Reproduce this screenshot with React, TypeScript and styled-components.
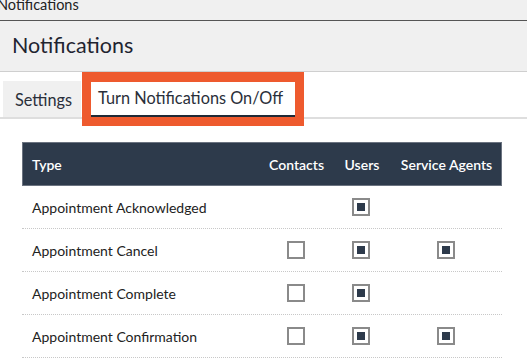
import React from "react";
import styled, { createGlobalStyle } from "styled-components";

const Global = createGlobalStyle`
  html, body { margin: 0; padding: 0; background: #ffffff; }
  body { font-family: "Lato", "Open Sans", sans-serif; color: #222; overflow: hidden; }
  * { box-sizing: border-box; }
`;

const Page = styled.div`
  position: relative;
  width: 527px;
  height: 361px;
  overflow: hidden;
  background: #fff;
`;

const TopBar = styled.div`
  height: 21px;
  background: #f0f0f0;
  border-bottom: 1px solid #555;
  font-size: 14.5px;
  line-height: 14px;
  overflow: hidden;
`;

const TopTitle = styled.div`
  margin-left: -3px;
  margin-top: -2px;
  color: #222;
`;

const Header = styled.div`
  height: 51px;
  background: #f0f0f0;
  border-bottom: 1px solid #cfcfcf;
  display: flex;
  align-items: center;
  padding-left: 12px;
  padding-bottom: 2px;
  font-size: 21.5px;
  color: #1f2430;
`;

const TabRow = styled.div`
  display: flex;
  align-items: flex-end;
  padding: 9px 0 0 3px;
  border-bottom: 2px solid #dedede;
`;

const Tab = styled.div<{ $active?: boolean }>`
  height: 36px;
  display: flex;
  align-items: center;
  font-size: 16.3px;
  color: #2a2f3a;
  background: ${(p) => (p.$active ? "#ffffff" : "#f0f0f0")};
  border-bottom: ${(p) => (p.$active ? "2px solid #1f2a36" : "0")};
  padding: ${(p) => (p.$active ? "0 12px 2px 11px" : "0 9px 0 12px")};
  margin-left: ${(p) => (p.$active ? "6px" : "0")};
`;

const Highlight = styled.div`
  position: absolute;
  left: 82px;
  top: 72px;
  width: 222px;
  height: 54px;
  border: 9px solid #ee5a2e;
  border-top-width: 10px;
  pointer-events: none;
`;

const Table = styled.div`
  margin: 23px 0 0 22px;
  width: 480px;
`;

const Grid = styled.div`
  display: grid;
  grid-template-columns: 236px 75px 56px 113px;
  align-items: center;
`;

const HeadRow = styled(Grid)`
  height: 44px;
  background: #2d3a4b;
  border: 1px solid #6b7380;
  color: #ffffff;
  font-size: 14px;
  font-weight: 600;
`;

const HeadCell = styled.div<{ $center?: boolean }>`
  text-align: ${(p) => (p.$center ? "center" : "left")};
  padding-left: ${(p) => (p.$center ? "0" : "9px")};
  white-space: nowrap;
`;

const BodyRow = styled(Grid)`
  height: 43px;
  border-bottom: 1px dotted #c8c8c8;
  font-size: 14px;
  color: #222;
`;

const TypeCell = styled.div`
  padding-left: 10px;
  padding-top: 1px;
  white-space: nowrap;
`;

const CheckCell = styled.div`
  display: flex;
  justify-content: center;
  align-items: center;
`;

const Box = styled.div<{ $checked?: boolean }>`
  width: 18px;
  height: 18px;
  border: 2px solid #8a8a8a;
  background: #fff;
  display: flex;
  align-items: center;
  justify-content: center;
  &::after {
    content: "";
    display: ${(p) => (p.$checked ? "block" : "none")};
    width: 8px;
    height: 8px;
    background: #2d3a4b;
  }
`;

type Val = boolean | null;
const rows: { name: string; vals: [Val, Val, Val] }[] = [
  { name: "Appointment Acknowledged", vals: [null, true, null] },
  { name: "Appointment Cancel", vals: [false, true, true] },
  { name: "Appointment Complete", vals: [false, true, null] },
  { name: "Appointment Confirmation", vals: [false, true, true] },
];

export default function App() {
  return (
    <Page>
      <Global />
      <TopBar>
        <TopTitle>Notifications</TopTitle>
      </TopBar>
      <Header>Notifications</Header>
      <TabRow>
        <Tab>Settings</Tab>
        <Tab $active>Turn Notifications On/Off</Tab>
      </TabRow>
      <Highlight />
      <Table>
        <HeadRow>
          <HeadCell>Type</HeadCell>
          <HeadCell $center>Contacts</HeadCell>
          <HeadCell $center>Users</HeadCell>
          <HeadCell $center>Service Agents</HeadCell>
        </HeadRow>
        {rows.map((r) => (
          <BodyRow key={r.name}>
            <TypeCell>{r.name}</TypeCell>
            {r.vals.map((v, i) => (
              <CheckCell key={i}>{v === null ? null : <Box $checked={v} />}</CheckCell>
            ))}
          </BodyRow>
        ))}
      </Table>
    </Page>
  );
}
